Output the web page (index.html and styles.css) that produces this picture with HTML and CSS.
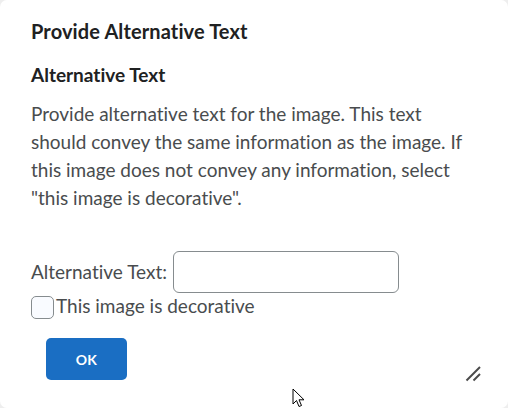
FILE: index.html
```html
<!DOCTYPE html>
<html lang="en">
<head>
<meta charset="utf-8">
<title>Provide Alternative Text</title>
<link rel="stylesheet" href="styles.css">
</head>
<body>
<div class="dialog">
  <h1 class="title">Provide Alternative Text</h1>
  <h2 class="subtitle">Alternative Text</h2>
  <p class="desc">Provide alternative text for the image. This text should convey the same information as the image. If this image does not convey any information, select "this image is decorative".</p>
  <div class="field-row">
    <label class="field-label" for="alt">Alternative Text:</label>
    <input class="alt-input" id="alt" type="text">
  </div>
  <label class="check-row"><span class="checkbox"></span><span class="check-text">This image is decorative</span></label>
  <div class="actions">
    <button class="ok" type="button">OK</button>
  </div>
  <svg class="resize" width="16" height="16" viewBox="0 0 16 16" aria-hidden="true">
    <line x1="15" y1="1" x2="1.5" y2="14.5" stroke="#4a4a4a" stroke-width="2"/>
    <line x1="15" y1="8" x2="8.5" y2="14.5" stroke="#4a4a4a" stroke-width="2"/>
  </svg>
  <svg class="cursor" width="14" height="22" viewBox="0 0 14 22" aria-hidden="true">
    <path d="M1 1 L1 16 L4.5 12.5 L7 18.5 L9.5 17.5 L7 11.8 L12 11.8 Z" fill="#fff" stroke="#000" stroke-width="1" stroke-linejoin="round"/>
  </svg>
</div>
</body>
</html>
```
FILE: styles.css
```css
html, body {
  margin: 0;
  padding: 0;
  background: #eeeeee;
}
.dialog {
  position: relative;
  box-sizing: border-box;
  width: 508px;
  height: 408px;
  background: #ffffff;
  border-radius: 7px;
  padding: 19px 0 0 31px;
  font-family: Lato, "Open Sans", sans-serif;
  font-variant-ligatures: none;
  color: #494c4e;
  overflow: hidden;
}
.title {
  margin: 0;
  font-size: 20px;
  line-height: 24px;
  font-weight: 700;
  letter-spacing: 0.12px;
  color: #202122;
}
.subtitle {
  margin: 20px 0 0;
  font-size: 19px;
  line-height: 24px;
  font-weight: 700;
  color: #202122;
}
.desc {
  margin: 13px 0 0;
  width: 450px;
  font-size: 19px;
  line-height: 28px;
}
.field-row {
  display: flex;
  align-items: center;
  gap: 6px;
  margin-top: 39px;
}
.field-label {
  font-size: 19px;
  line-height: 28px;
}
.alt-input {
  box-sizing: border-box;
  width: 226px;
  height: 42px;
  margin: 0;
  border: 1px solid #868c8f;
  border-radius: 6px;
  background: #fff;
  font: inherit;
  padding: 0 10px;
}
.check-row {
  display: flex;
  align-items: flex-start;
  gap: 2px;
  margin-top: 2px;
}
.checkbox {
  box-sizing: border-box;
  width: 23px;
  height: 23px;
  margin-top: 1px;
  border: 1px solid #868c8f;
  border-radius: 5px;
  background: #f9fbff;
}
.check-text {
  font-size: 19px;
  line-height: 21px;
}
.actions {
  margin-top: 19px;
  padding-left: 15px;
}
.ok {
  width: 81px;
  height: 42px;
  border: none;
  border-radius: 5px;
  background: #1a6ec3;
  color: #fff;
  font-family: Lato, sans-serif;
  font-size: 14px;
  font-weight: 700;
  letter-spacing: 0.3px;
}
.resize {
  position: absolute;
  left: 465px;
  top: 366px;
}
.cursor {
  position: absolute;
  left: 292px;
  top: 388px;
}
```
